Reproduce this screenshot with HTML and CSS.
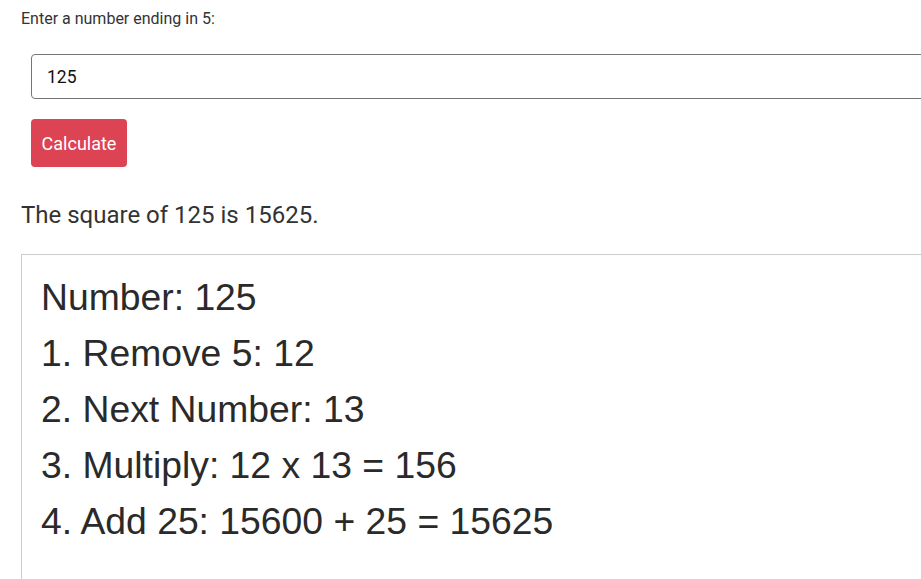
FILE: index.html
```
<!DOCTYPE html>
<html lang="en">

<head>
    <meta charset="UTF-8">
    <meta name="viewport" content="width=device-width, initial-scale=1.0">
    <title>Square of a number ending in 5</title>
    <link rel="stylesheet" href="styles.css">
</head>

<body>

    <div class="page">
        <label class="prompt" for="number">Enter a number ending in 5:</label>

        <div class="field">
            <input type="text" id="number" value="125">
        </div>

        <button type="button" class="calc-btn">Calculate</button>

        <p class="result">The square of 125 is 15625.</p>

        <div class="steps">
            <div class="step">Number: 125</div>
            <div class="step">1. Remove 5: 12</div>
            <div class="step">2. Next Number: 13</div>
            <div class="step">3. Multiply: 12 x 13 = 156</div>
            <div class="step">4. Add 25: 15600 + 25 = 15625</div>
        </div>
    </div>

</body>

</html>
```

FILE: styles.css
```
html,
body {
    margin: 0;
    overflow: hidden;
}

body {
    font-family: Roboto, "Liberation Sans", Arial, sans-serif;
    color: #212529;
    background-color: #fff;
}

.page {
    width: 1100px;
    padding: 8px 0 0 21px;
}

.prompt {
    display: block;
    font-size: 16px;
    line-height: 21px;
    color: #333;
}

.field {
    margin: 25px 0 0 10px;
}

.field input {
    box-sizing: border-box;
    width: 1000px;
    height: 45px;
    padding: 0 15px;
    border: 1px solid #767676;
    border-radius: 4px;
    font-family: Roboto, "Liberation Sans", Arial, sans-serif;
    font-size: 17.5px;
    color: #111;
}

.calc-btn {
    display: block;
    margin: 20px 0 0 10px;
    width: 96px;
    height: 48px;
    padding: 0;
    background-color: #dc4353;
    color: white;
    border: none;
    border-radius: 4px;
    font-family: Roboto, "Liberation Sans", Arial, sans-serif;
    font-size: 18px;
    cursor: pointer;
}

.result {
    margin: 34px 0 0;
    font-size: 24px;
    line-height: 28px;
    color: #333;
}

.steps {
    margin-top: 25px;
    min-height: 400px;
    padding: 14px 0 0 19px;
    border: 1px solid #ccc;
    font-family: "Liberation Sans", Arial, sans-serif;
    font-size: 37.3px;
    line-height: 56px;
    color: #2a2a2a;
}
```
